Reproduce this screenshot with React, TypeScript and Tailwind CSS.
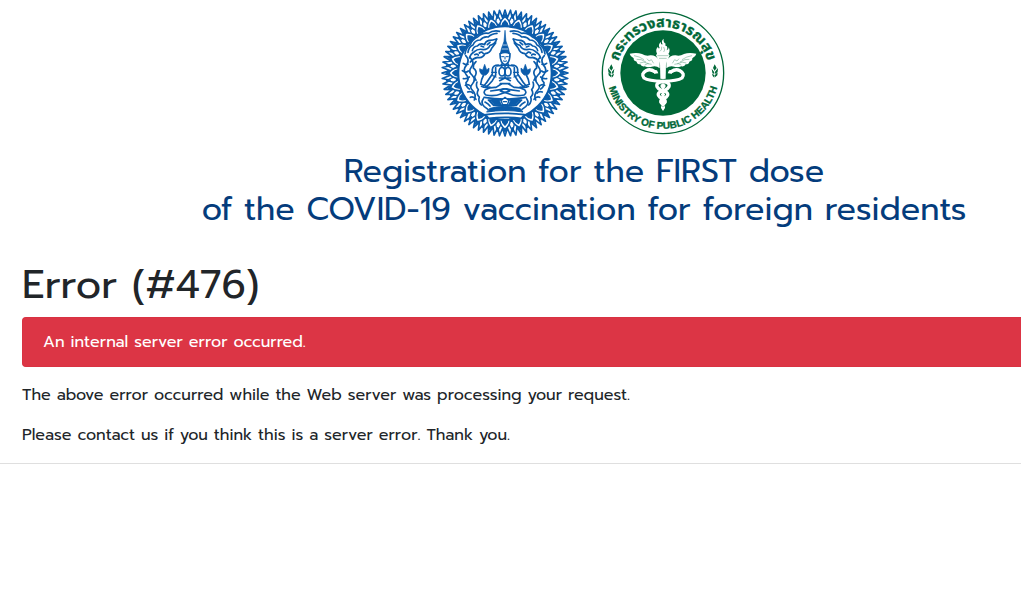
const BLUE = '#0b5cab'
const GREEN = '#006838'

// star outline around a centre point, used for the serrated emblem border
function star(cx: number, cy: number, outer: number, inner: number, points: number) {
  const coords: string[] = []
  for (let i = 0; i < points * 2; i++) {
    const r = i % 2 === 0 ? outer : inner
    const a = (Math.PI * i) / points
    coords.push(`${(cx + r * Math.sin(a)).toFixed(1)},${(cy - r * Math.cos(a)).toFixed(1)}`)
  }
  return coords.join(' ')
}

function angles(count: number) {
  return Array.from({ length: count }, (_, i) => (360 / count) * i)
}

export default function App() {
  return (
    <div className="bg-white font-['Prompt','Inter',sans-serif] text-base text-[#212529]">
      <header className="pl-[147px] pt-[9px] text-center">
        <div className="flex items-center justify-center gap-8 pr-0.5">
          <ForeignAffairsEmblem />
          <PublicHealthEmblem />
        </div>
        <h2 className="mt-4 text-[32px] leading-[38px] text-[#043c7c]">
          Registration for the FIRST dose
          <br />
          of the COVID-19 vaccination for foreign residents
        </h2>
      </header>

      <main className="mt-8 border-b border-[#dfdfdf] pb-4 pl-[22px]">
        <h1 className="mb-2 text-[40px] leading-[48px]">Error (#476)</h1>
        <div
          role="alert"
          className="mb-4 rounded-l border border-r-0 border-[#d93242] bg-[#dc3545] px-5 py-3 text-white"
        >
          An internal server error occurred.
        </div>
        <p className="mb-4">The above error occurred while the Web server was processing your request.</p>
        <p>Please contact us if you think this is a server error. Thank you.</p>
      </main>
    </div>
  )
}

function ForeignAffairsEmblem() {
  return (
    <svg
      viewBox="16 15 384 384"
      className="size-32"
      fill="none"
      stroke={BLUE}
      strokeLinejoin="round"
      strokeLinecap="round"
      role="img"
      aria-label="Ministry of Foreign Affairs"
    >
      <polygon points={star(208, 207, 189, 166, 72)} strokeWidth="5" />
      <polygon points={star(208, 207, 177, 150, 48)} strokeWidth="4" />
      <circle cx="208" cy="207" r="143" strokeWidth="12" />
      {angles(24).map((a) => (
        <g key={a} transform={`rotate(${a} 208 207)`}>
          <path d="M192 64Q194 48 208 38Q222 48 224 64" fill="white" strokeWidth="5" />
          <path d="M199 66Q200 56 208 50Q216 56 217 66Z" fill={BLUE} strokeWidth="4" />
        </g>
      ))}

      <FlameHalf />
      <g transform="matrix(-1 0 0 1 416 0)">
        <FlameHalf />
      </g>

      {/* crown and head */}
      <path d="M208 80L205 112L198 132L194 148H222L218 132L211 112Z" fill={BLUE} strokeWidth="2" />
      <path d="M200 135H216M202 123H214" stroke="white" strokeWidth="2" />
      <path d="M193 149Q193 177 208 182Q223 177 223 149Q208 141 193 149Z" fill="white" strokeWidth="5" />
      <path d="M198 158H204M212 158H218M208 158V165M203 171Q208 174 213 171" strokeWidth="3" />
      {/* necklace and chest */}
      <path d="M198 180V188M218 180V188M183 186Q208 181 233 186" strokeWidth="5" />
      <ellipse cx="199" cy="203" rx="9" ry="13" strokeWidth="5" />
      <ellipse cx="217" cy="203" rx="9" ry="13" strokeWidth="5" />
      <path d="M208 186V220M191 222H225M192 230L208 222L224 230M194 239H222" strokeWidth="5" />
      {/* seat */}
      <path d="M145 280Q208 290 271 280M158 288H258L242 304H174Z" strokeWidth="5" />
      <path d="M162 289L190 288L197 303L176 302ZM254 289L226 288L219 303L240 302Z" fill={BLUE} strokeWidth="3" />
      <path d="M196 290L208 280L220 290L215 302H201ZM203 293H213" fill="white" strokeWidth="4" />
      <path d="M163 313Q208 301 253 313L262 324Q208 315 154 324Z" fill={BLUE} strokeWidth="3" />
      <path d="M150 332Q208 324 266 332L257 343Q208 337 159 343Z" fill="white" strokeWidth="5" />
    </svg>
  )
}

// left half of everything in the disc that is mirrored
function FlameHalf() {
  return (
    <g strokeWidth="5">
      {/* upper flames sweeping in towards the crown */}
      <path d="M192 82Q172 78 158 88Q140 85 126 99Q109 106 104 122Q90 132 88 150" />
      <path d="M184 88Q167 89 158 99Q143 96 134 108Q118 108 112 123Q99 129 97 145" />
      <path d="M183 105Q179 121 163 124Q157 137 143 137Q127 133 116 143Q105 149 101 162" />
      <path d="M183 105Q168 110 160 109Q149 112 147 122Q134 116 125 126Q113 127 110 140" />
      <path d="M180 117L168 133Q163 148 148 149Q141 164 126 160Q113 162 104 174" />
      <path d="M155 122L163 115M136 126L144 129M131 147Q138 141 143 149M117 152Q124 148 128 153" />
      {/* flames down the side */}
      <path d="M90 155Q104 168 92 184Q80 197 91 211Q103 224 91 236Q91 249 101 255" />
      <path d="M103 160Q119 176 106 191Q97 202 109 213Q122 227 110 240Q100 250 111 260Q123 272 116 288" />
      <path d="M121 173Q111 182 113 192Q125 201 120 213Q114 219 121 229" />
      <path d="M83 178Q91 184 97 181M80 200Q90 208 98 201M83 224Q94 225 101 219M89 244Q97 239 104 246M96 264Q106 260 112 268M104 280Q113 276 121 286" />
      <path d="M124 234Q119 247 128 257Q120 269 131 279Q126 292 137 303" />
      {/* raised blossom */}
      <path d="M139 212Q130 205 132 194L141 198L147 181L153 198L160 192Q163 204 151 213Z" fill={BLUE} strokeWidth="2" />
      <path d="M144 213Q137 225 135 241L157 249" />
      {/* arm */}
      <path d="M188 183Q172 183 170 196V210L160 225Q154 236 144 246M180 191V213L170 230Q161 241 151 249" />
      <path d="M168 205H182M171 215L181 219M137 247Q148 253 163 249" strokeWidth="4" />
      {/* folded leg */}
      <path d="M197 240L181 250Q163 249 149 257Q141 267 151 273Q177 278 197 269L222 261Q208 250 194 257L165 261" />
      <path d="M143 284Q134 297 146 308L157 316M148 294Q158 299 163 306" />
    </g>
  )
}

function PublicHealthEmblem() {
  return (
    <svg viewBox="22 23 372 372" className="size-[124px]" role="img" aria-label="Ministry of Public Health">
      <defs>
        <path id="seal-top" d="M70 209A138 138 0 0 1 346 209" />
        <path id="seal-bottom" d="M40 209A168 168 0 0 0 376 209" />
      </defs>
      <circle cx="208" cy="209" r="182" fill="white" stroke={GREEN} strokeWidth="4" />
      <circle cx="208" cy="209" r="128" fill={GREEN} />
      <text
        fill={GREEN}
        stroke={GREEN}
        strokeWidth="1"
        textAnchor="middle"
        className="font-['Noto_Sans_Thai','Noto_Sans',sans-serif] text-[43px] font-bold"
      >
        <textPath href="#seal-top" startOffset="50%">
          กระทรวงสาธารณสุข
        </textPath>
      </text>
      <text
        fill={GREEN}
        stroke={GREEN}
        strokeWidth="1"
        textAnchor="middle"
        className="font-['Liberation_Sans',sans-serif] text-[30px] font-bold"
      >
        <textPath href="#seal-bottom" startOffset="50%">
          MINISTRY OF PUBLIC HEALTH
        </textPath>
      </text>
      <SideLeaf />
      <g transform="matrix(-1 0 0 1 416 0)">
        <SideLeaf />
      </g>

      {/* torch */}
      <path
        d="M190 151Q184 138 193 130Q194 138 198 134Q192 123 202 116Q200 125 207 123Q201 113 210 106Q208 117 216 121Q213 128 219 128Q224 135 219 141Q226 138 225 132Q231 143 224 152L228 156L219 176L216 184H200L197 176L187 156Z"
        fill="white"
      />
      <path d="M199 144Q205 141 204 130M210 146Q216 141 210 131M191 157H224M196 165H219" fill="none" stroke={GREEN} strokeWidth="1" />
      <path d="M199 180H217L214 314L208 323L202 314Z" fill="white" />
      <Wing />
      <g transform="matrix(-1 0 0 1 416 0)">
        <Wing />
      </g>
      {/* snakes */}
      <g fill="none" strokeLinecap="round">
        <path
          d="M183 205Q170 195 157 202Q141 211 151 224Q164 233 208 234Q230 238 226 250Q219 262 200 265Q188 272 198 281L212 288Q220 296 208 303"
          stroke={GREEN}
          strokeWidth="14"
        />
        <path
          d="M233 205Q246 195 259 202Q275 211 265 224Q252 233 208 234Q186 238 190 250Q197 262 216 265Q228 272 218 281L204 288Q196 296 208 303"
          stroke={GREEN}
          strokeWidth="14"
        />
        <path
          d="M183 205Q170 195 157 202Q141 211 151 224Q164 233 208 234Q230 238 226 250Q219 262 200 265Q188 272 198 281L212 288Q220 296 208 303"
          stroke="white"
          strokeWidth="10"
        />
        <path
          d="M233 205Q246 195 259 202Q275 211 265 224Q252 233 208 234Q186 238 190 250Q197 262 216 265Q228 272 218 281L204 288Q196 296 208 303"
          stroke="white"
          strokeWidth="10"
        />
      </g>
      <path d="M204 240H212V310H204Z" fill="white" />
      <path d="M176 199L190 201L194 210L182 211ZM240 199L226 201L222 210L234 211Z" fill="white" />
    </svg>
  )
}

function Wing() {
  return (
    <g>
      <path
        d="M108 151Q130 146 145 152Q158 160 170 156Q186 155 198 172L198 195Q188 186 174 190Q165 195 153 189Q143 191 140 183Q130 183 129 175Q119 173 120 165Q110 160 108 151Z"
        fill="white"
      />
      <path
        d="M121 157Q137 159 151 169M129 168Q142 166 157 176M138 179Q149 173 165 181M153 185Q161 178 174 183M160 166L166 173L173 169L180 180"
        fill="none"
        stroke={GREEN}
        strokeWidth="1"
      />
    </g>
  )
}

function SideLeaf() {
  return (
    <g fill={GREEN}>
      <path d="M53 183L58 194L53 202L47 194Z" />
      <path d="M43 194L53 207L50 212L44 205ZM62 196L60 208L54 213L55 205ZM44 207L53 216L52 222L45 216ZM61 210L59 218L54 223L54 216Z" />
    </g>
  )
}
